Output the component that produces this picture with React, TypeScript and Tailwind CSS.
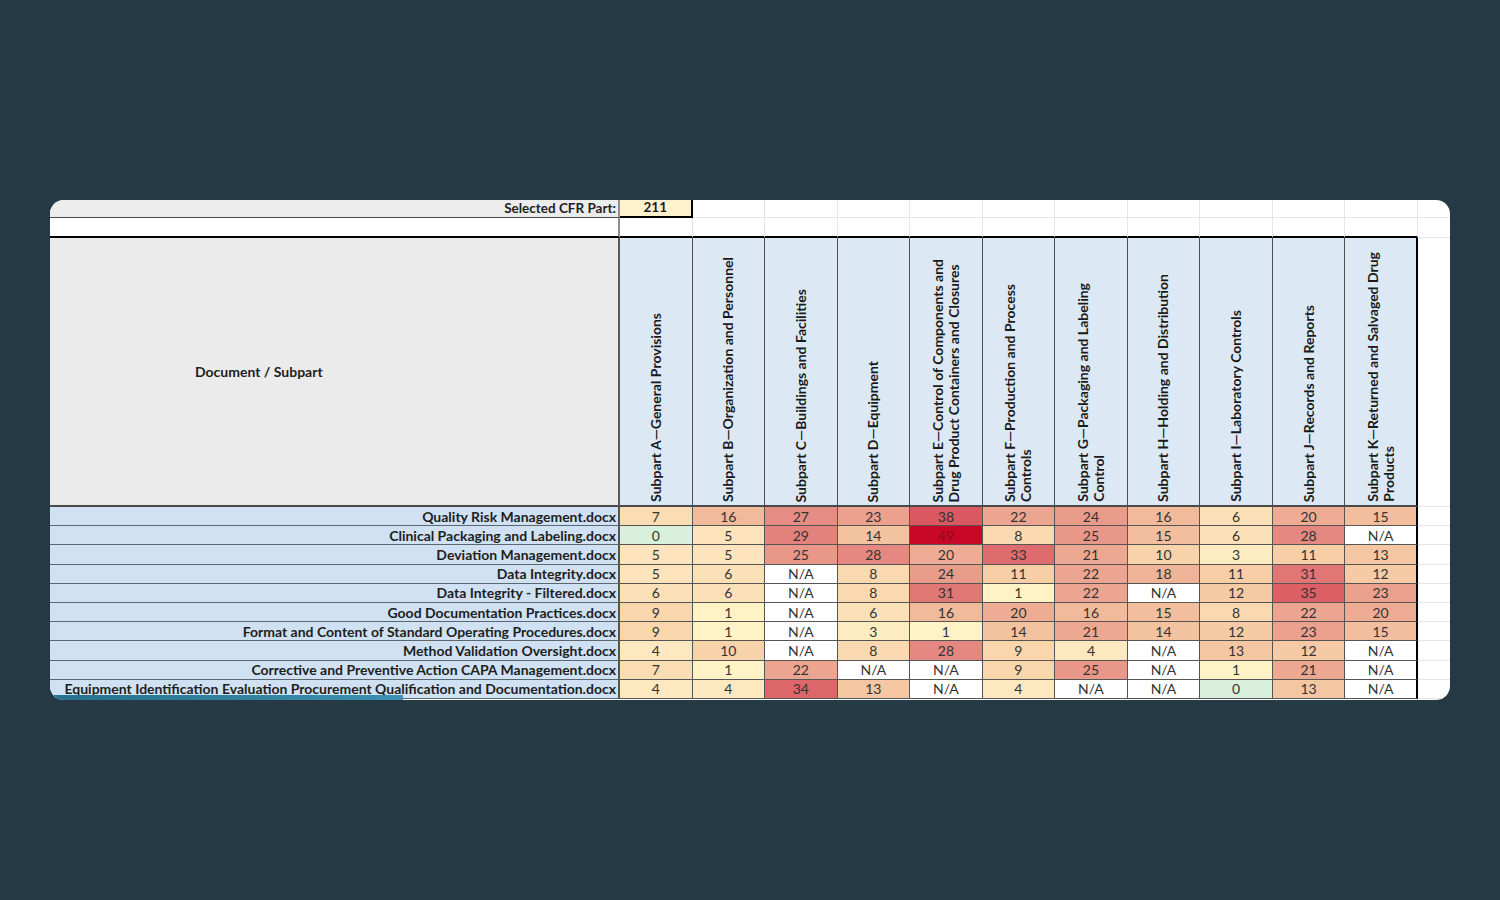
import React from "react";

const headers: string[][] = [
  ["Subpart A—General Provisions"],
  ["Subpart B—Organization and Personnel"],
  ["Subpart C—Buildings and Facilities"],
  ["Subpart D—Equipment"],
  ["Subpart E—Control of Components and", "Drug Product Containers and Closures"],
  ["Subpart F—Production and Process", "Controls"],
  ["Subpart G—Packaging and Labeling", "Control"],
  ["Subpart H—Holding and Distribution"],
  ["Subpart I—Laboratory Controls"],
  ["Subpart J—Records and Reports"],
  ["Subpart K—Returned and Salvaged Drug", "Products"],
];

type V = number | null;
const rows: [string, V[]][] = [
  ["Quality Risk Management.docx", [7, 16, 27, 23, 38, 22, 24, 16, 6, 20, 15]],
  ["Clinical Packaging and Labeling.docx", [0, 5, 29, 14, 49, 8, 25, 15, 6, 28, null]],
  ["Deviation Management.docx", [5, 5, 25, 28, 20, 33, 21, 10, 3, 11, 13]],
  ["Data Integrity.docx", [5, 6, null, 8, 24, 11, 22, 18, 11, 31, 12]],
  ["Data Integrity - Filtered.docx", [6, 6, null, 8, 31, 1, 22, null, 12, 35, 23]],
  ["Good Documentation Practices.docx", [9, 1, null, 6, 16, 20, 16, 15, 8, 22, 20]],
  ["Format and Content of Standard Operating Procedures.docx", [9, 1, null, 3, 1, 14, 21, 14, 12, 23, 15]],
  ["Method Validation Oversight.docx", [4, 10, null, 8, 28, 9, 4, null, 13, 12, null]],
  ["Corrective and Preventive Action CAPA Management.docx", [7, 1, 22, null, null, 9, 25, null, 1, 21, null]],
  ["Equipment Identification Evaluation Procurement Qualification and Documentation.docx", [4, 4, 34, 13, null, 4, null, null, 0, 13, null]],
];

const stops: [number, [number, number, number]][] = [
  [0, [217, 240, 220]],
  [1, [255, 243, 198]],
  [5, [253, 228, 188]],
  [10, [248, 210, 168]],
  [16, [241, 186, 155]],
  [23, [235, 161, 142]],
  [28, [228, 136, 129]],
  [35, [220, 96, 102]],
  [38, [218, 88, 98]],
  [49, [201, 8, 40]],
];

function colorFor(v: number): string {
  for (let i = 0; i < stops.length - 1; i++) {
    const [a, ca] = stops[i];
    const [b, cb] = stops[i + 1];
    if (v >= a && v <= b) {
      const t = (v - a) / (b - a);
      const c = ca.map((x, k) => Math.round(x + (cb[k] - x) * t));
      return `rgb(${c[0]},${c[1]},${c[2]})`;
    }
  }
  const c = stops[stops.length - 1][1];
  return `rgb(${c[0]},${c[1]},${c[2]})`;
}

export default function App() {
  return (
    <div className="min-h-screen w-full bg-[#263a45] pt-[200px] font-['Lato','Liberation_Sans',sans-serif]">
      <div className="relative mx-auto w-[1400px] h-[500px] bg-white rounded-[14px] overflow-hidden">
        <div className="grid grid-cols-[570px_repeat(11,72.545px)_1fr]">
          {/* Row 1 */}
          <div className="h-[18px] bg-[#ececec] border-b border-b-[#4a4a4a] border-r-2 border-r-[#8f8f8f] flex items-center justify-end pr-[2px] text-[13.5px] font-bold text-[#1e1e1e] leading-none">
            Selected CFR Part:
          </div>
          <div className="h-[18px] bg-[#fff2cc] border-r-2 border-b-2 border-black flex items-center justify-center text-[13.5px] font-bold text-[#1e1e1e] leading-none">
            211
          </div>
          {Array.from({ length: 10 }).map((_, i) => (
            <div key={"r1" + i} className="h-[18px] border-r border-b border-[#e6e6e6]" />
          ))}
          <div className="h-[18px] border-b border-[#e6e6e6]" />

          {/* Row 2 */}
          <div className="h-[20px] border-r-2 border-r-[#8f8f8f] border-b-2 border-b-black" />
          {Array.from({ length: 11 }).map((_, i) => (
            <div key={"r2" + i} className="h-[20px] border-r border-r-[#e6e6e6] border-b-2 border-b-black" />
          ))}
          <div className="h-[20px] border-b border-[#e6e6e6]" />

          {/* Header row */}
          <div className="h-[269px] bg-[#ebebeb] border-r-2 border-r-[#5a5a5a] border-b-2 border-b-[#4a4a4a] flex items-center pl-[145px] text-[14px] font-bold text-[#1e1e1e]">
            Document / Subpart
          </div>
          {headers.map((lines, i) => (
            <div
              key={"h" + i}
              className={
                "h-[269px] bg-[#dce9f5] border-b-2 border-b-[#4a4a4a] flex items-end justify-center pb-[3px] " +
                (i === 10 ? "border-r-2 border-r-black" : "border-r border-r-[#4d4d4d]")
              }
            >
              <div className="[writing-mode:vertical-rl] rotate-180 text-left text-[14px] font-bold leading-[16px] text-[#1a1a1a] whitespace-nowrap">
                {lines.map((l, k) => (
                  <div key={k}>{l}</div>
                ))}
              </div>
            </div>
          ))}
          <div className="h-[269px] border-b border-[#e6e6e6]" />

          {/* Data rows */}
          {rows.map(([label, vals], r) => (
            <React.Fragment key={"d" + r}>
              <div className="h-[19.2px] bg-[#cfe1f2] border-r-2 border-r-[#555] border-b border-b-[#5c6670] flex items-center justify-end pr-[2px] pt-[1px] text-[14px] font-bold text-[#1e1e1e] leading-none whitespace-nowrap overflow-hidden">
                {label}
              </div>
              {vals.map((v, c) => (
                <div
                  key={c}
                  className={
                    "h-[19.2px] border-b border-b-[#555] flex items-center justify-center pt-[1px] text-[14px] leading-none " +
                    (c === 10 ? "border-r-2 border-r-black " : "border-r border-r-[#555] ") +
                    (v === 49 ? "text-[#8e0a1f]" : "text-[#333]")
                  }
                  style={{ backgroundColor: v === null ? "#ffffff" : colorFor(v) }}
                >
                  {v === null ? "N/A" : v}
                </div>
              ))}
              <div className="h-[19.2px] border-b border-[#e6e6e6]" />
            </React.Fragment>
          ))}
        </div>
        <div className="absolute left-0 bottom-0 w-[353px] h-[5px] bg-linear-to-r from-[#27708e] to-[#3d91b2]" />
      </div>
    </div>
  );
}
